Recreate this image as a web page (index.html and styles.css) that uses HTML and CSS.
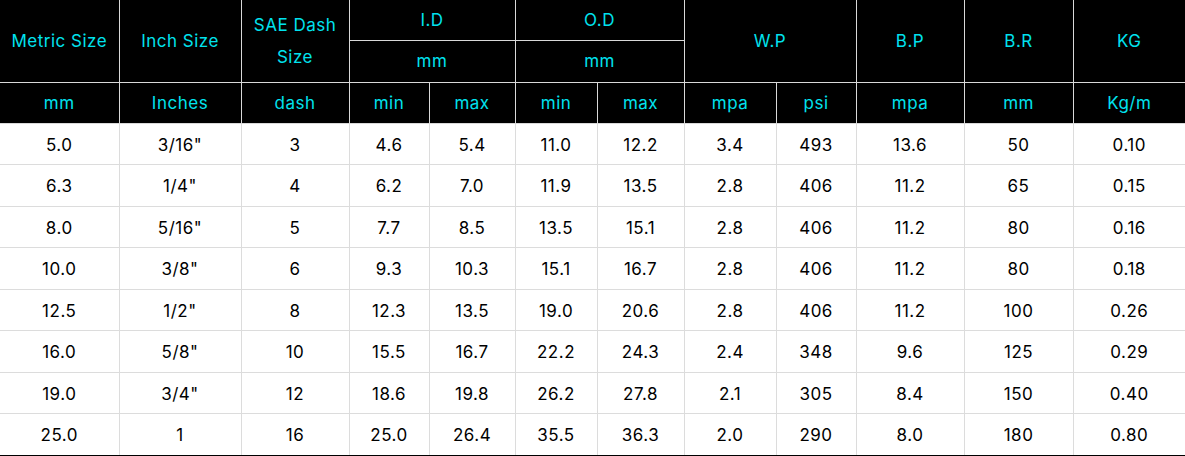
FILE: index.html
```html
<!DOCTYPE html>
<html>
<head>
<meta charset="utf-8">
<link rel="stylesheet" href="styles.css">
</head>
<body>
<table class="spec">
  <colgroup>
    <col style="width:119px"><col style="width:122px"><col style="width:108px">
    <col style="width:80px"><col style="width:86px"><col style="width:82px"><col style="width:87px">
    <col style="width:92px"><col style="width:80px"><col style="width:108px"><col style="width:109px"><col style="width:112px">
  </colgroup>
  <thead>
    <tr class="h1">
      <th rowspan="2">Metric Size</th>
      <th rowspan="2">Inch Size</th>
      <th rowspan="2" class="wrap">SAE Dash Size</th>
      <th colspan="2">I.D</th>
      <th colspan="2">O.D</th>
      <th colspan="2" rowspan="2">W.P</th>
      <th rowspan="2">B.P</th>
      <th rowspan="2">B.R</th>
      <th rowspan="2">KG</th>
    </tr>
    <tr class="h2">
      <th colspan="2">mm</th>
      <th colspan="2">mm</th>
    </tr>
    <tr class="h3">
      <th>mm</th><th>Inches</th><th>dash</th><th>min</th><th>max</th><th>min</th><th>max</th><th>mpa</th><th>psi</th><th>mpa</th><th>mm</th><th>Kg/m</th>
    </tr>
  </thead>
  <tbody>
    <tr><td>5.0</td><td>3/16"</td><td>3</td><td>4.6</td><td>5.4</td><td>11.0</td><td>12.2</td><td>3.4</td><td>493</td><td>13.6</td><td>50</td><td>0.10</td></tr>
    <tr><td>6.3</td><td>1/4"</td><td>4</td><td>6.2</td><td>7.0</td><td>11.9</td><td>13.5</td><td>2.8</td><td>406</td><td>11.2</td><td>65</td><td>0.15</td></tr>
    <tr><td>8.0</td><td>5/16"</td><td>5</td><td>7.7</td><td>8.5</td><td>13.5</td><td>15.1</td><td>2.8</td><td>406</td><td>11.2</td><td>80</td><td>0.16</td></tr>
    <tr><td>10.0</td><td>3/8"</td><td>6</td><td>9.3</td><td>10.3</td><td>15.1</td><td>16.7</td><td>2.8</td><td>406</td><td>11.2</td><td>80</td><td>0.18</td></tr>
    <tr><td>12.5</td><td>1/2"</td><td>8</td><td>12.3</td><td>13.5</td><td>19.0</td><td>20.6</td><td>2.8</td><td>406</td><td>11.2</td><td>100</td><td>0.26</td></tr>
    <tr><td>16.0</td><td>5/8"</td><td>10</td><td>15.5</td><td>16.7</td><td>22.2</td><td>24.3</td><td>2.4</td><td>348</td><td>9.6</td><td>125</td><td>0.29</td></tr>
    <tr><td>19.0</td><td>3/4"</td><td>12</td><td>18.6</td><td>19.8</td><td>26.2</td><td>27.8</td><td>2.1</td><td>305</td><td>8.4</td><td>150</td><td>0.40</td></tr>
    <tr><td>25.0</td><td>1</td><td>16</td><td>25.0</td><td>26.4</td><td>35.5</td><td>36.3</td><td>2.0</td><td>290</td><td>8.0</td><td>180</td><td>0.80</td></tr>
  </tbody>
</table>
</body>
</html>
```
FILE: styles.css
```css
html, body {
  margin: 0;
  padding: 0;
  background: #fff;
}
.spec {
  width: 1185px;
  table-layout: fixed;
  border-collapse: collapse;
  font-family: Inter, "Open Sans", sans-serif;
  font-size: 17px;
  letter-spacing: 0.5px;
  border-bottom: 2px solid #000;
}
.spec th {
  background: #000;
  color: #00e2ee;
  font-weight: 400;
  text-align: center;
  vertical-align: middle;
  border: 1px solid #d9d9d9;
  padding: 0 2px;
  line-height: 32px;
}
.spec td {
  color: #000;
  text-align: center;
  vertical-align: middle;
  border: 1px solid #dcdcdc;
  padding: 2px 0 0;
  height: 38.5px;
}
.spec tr > :first-child { border-left: none; }
.spec tr > :last-child { border-right: none; }
.spec thead tr:first-child th { border-top: none; }
.spec .h1 { height: 40px; }
.spec .h2 { height: 42px; }
.spec .h3 { height: 41px; }
.spec .wrap { padding: 0 6px; }
```
